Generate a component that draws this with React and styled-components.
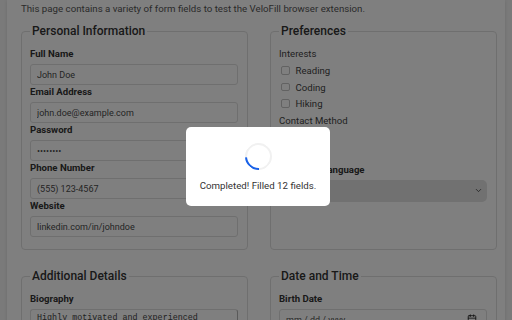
import React from "react";
import styled, { createGlobalStyle } from "styled-components";
import { ChevronDown, Calendar } from "lucide-react";

const GlobalStyle = createGlobalStyle`
    html, body {
        margin: 0;
        padding: 0;
        overflow: hidden;
        background: #f5f5f5;
        font-family: Roboto, "Liberation Sans", Arial, sans-serif;
    }
`;

const Page = styled.div`
    padding: 0 7px;
    height: 320px;
`;

const Container = styled.div`
    background: #ffffff;
    padding: 2px 8px 0 14px;
    min-height: 340px;
    box-shadow: 0 0 4px rgba(0, 0, 0, 0.12);
`;

const Intro = styled.p`
    margin: 0;
    font-size: 9.7px;
    line-height: 14px;
    color: #555;
`;

const Grid = styled.div`
    display: grid;
    grid-template-columns: 1fr 1fr;
    column-gap: 22px;
    row-gap: 19px;
    margin-top: 8px;
`;

const Fieldset = styled.fieldset`
    margin: 0;
    min-width: 0;
    border: 1px solid #dedede;
    border-radius: 4px;
    padding: 9px 9px 12px 8px;
`;

const Legend = styled.legend`
    padding: 0 2px;
    font-size: 12px;
    line-height: 14px;
    font-weight: 500;
    color: #333;
`;

const Label = styled.label`
    display: block;
    font-size: 9.6px;
    line-height: 13px;
    font-weight: 700;
    color: #333;
    margin: ${(p) => (p.$top ? `${p.$top}px` : "0")} 0 4px;
`;

const GroupLabel = styled.div`
    font-size: 9.6px;
    line-height: 13px;
    color: #444;
    margin: ${(p) => (p.$first ? "0" : "2.25px")} 0 2.25px;
`;

const Input = styled.input`
    display: block;
    width: 100%;
    box-sizing: border-box;
    height: 21px;
    margin: 0;
    padding: 0 6px;
    border: 1px solid #dedede;
    border-radius: 3px;
    background: #fff;
    font-family: Roboto, "Liberation Sans", Arial, sans-serif;
    font-size: 9px;
    color: #4a4a4a;
    outline: none;

    &::placeholder {
        color: #555;
    }
`;

const TextArea = styled.textarea`
    display: block;
    width: 100%;
    box-sizing: border-box;
    height: 52px;
    margin: 0;
    padding: 3px 6px;
    border: 1px solid #dedede;
    border-right-color: #b5b5b5;
    border-radius: 3px;
    font-family: "Liberation Mono", "DejaVu Sans Mono", monospace;
    font-size: 8.4px;
    line-height: 11px;
    color: #444;
    resize: none;
    outline: none;
`;

const OptionRow = styled.label`
    display: flex;
    align-items: center;
    height: 16.5px;
    font-size: 9.6px;
    color: #444;
`;

const Box = styled.input`
    appearance: none;
    width: 8.5px;
    height: 8.5px;
    margin: 0 6px 0 2px;
    border: 1px solid #c4c4c4;
    border-radius: ${(p) => (p.type === "radio" ? "50%" : "2px")};
    background: #fff;
`;

const Field = styled.div`
    position: relative;
`;

const Select = styled.select`
    display: block;
    width: 100%;
    height: 21.5px;
    appearance: none;
    border: none;
    border-radius: 5px;
    background: #e2e2e2;
    padding: 0 7px;
    font-family: Roboto, "Liberation Sans", Arial, sans-serif;
    font-size: 9px;
    color: #333;
    outline: none;
`;

const Chevron = styled(ChevronDown)`
    position: absolute;
    right: 4px;
    top: 6px;
    pointer-events: none;
    color: #333;
`;

const CalendarIcon = styled(Calendar)`
    position: absolute;
    right: 10px;
    top: 5px;
    pointer-events: none;
    color: #222;
`;

const Overlay = styled.div`
    position: fixed;
    inset: 0;
    background: rgba(0, 0, 0, 0.5);
`;

const Modal = styled.div`
    position: fixed;
    left: 186px;
    top: 127px;
    width: 144px;
    height: 79px;
    box-sizing: border-box;
    padding-top: 16px;
    background: #fff;
    border-radius: 5px;
    display: flex;
    flex-direction: column;
    align-items: center;
`;

const Spinner = styled.div`
    width: 27px;
    height: 27px;
    box-sizing: border-box;
    border: 2.5px solid #f1f1f1;
    border-bottom-color: #1a62e8;
    border-radius: 50%;
    transform: rotate(42deg);
`;

const ModalText = styled.div`
    margin-top: 10px;
    font-size: 9.7px;
    line-height: 12px;
    color: #333;
`;

const personal = [
    ["Full Name", "text", "John Doe"],
    ["Email Address", "email", "john.doe@example.com"],
    ["Password", "password", "password"],
    ["Phone Number", "tel", "(555) 123-4567"],
    ["Website", "text", "linkedin.com/in/johndoe"],
];

const App = () => {
    return (
        <>
            <GlobalStyle />
            <Page>
                <Container>
                    <Intro>This page contains a variety of form fields to test the VeloFill browser extension.</Intro>
                    <Grid>
                        <Fieldset>
                            <Legend>Personal Information</Legend>
                            {personal.map(([label, type, value]) => (
                                <div key={label}>
                                    <Label>{label}</Label>
                                    <Input type={type} defaultValue={value} readOnly />
                                </div>
                            ))}
                        </Fieldset>
                        <Fieldset>
                            <Legend>Preferences</Legend>
                            <GroupLabel $first>Interests</GroupLabel>
                            <OptionRow><Box type="checkbox" />Reading</OptionRow>
                            <OptionRow><Box type="checkbox" />Coding</OptionRow>
                            <OptionRow><Box type="checkbox" />Hiking</OptionRow>
                            <GroupLabel>Contact Method</GroupLabel>
                            <OptionRow><Box type="radio" name="contact" />Email</OptionRow>
                            <OptionRow><Box type="radio" name="contact" />Phone</OptionRow>
                            <Label $top={0.75}>Preferred Language</Label>
                            <Field>
                                <Select defaultValue="en">
                                    <option value="en">English</option>
                                    <option value="es">Spanish</option>
                                </Select>
                                <Chevron size={9} strokeWidth={2} />
                            </Field>
                        </Fieldset>
                        <Fieldset>
                            <Legend>Additional Details</Legend>
                            <Label>Biography</Label>
                            <TextArea
                                readOnly
                                defaultValue="Highly motivated and experienced software developer with a passion for building tools."
                            />
                        </Fieldset>
                        <Fieldset>
                            <Legend>Date and Time</Legend>
                            <Label>Birth Date</Label>
                            <Field>
                                <Input type="text" placeholder="mm / dd / yyyy" readOnly />
                                <CalendarIcon size={10} strokeWidth={2} />
                            </Field>
                        </Fieldset>
                    </Grid>
                </Container>
            </Page>
            <Overlay />
            <Modal>
                <Spinner />
                <ModalText>Completed! Filled 12 fields.</ModalText>
            </Modal>
        </>
    );
};

export default App;
